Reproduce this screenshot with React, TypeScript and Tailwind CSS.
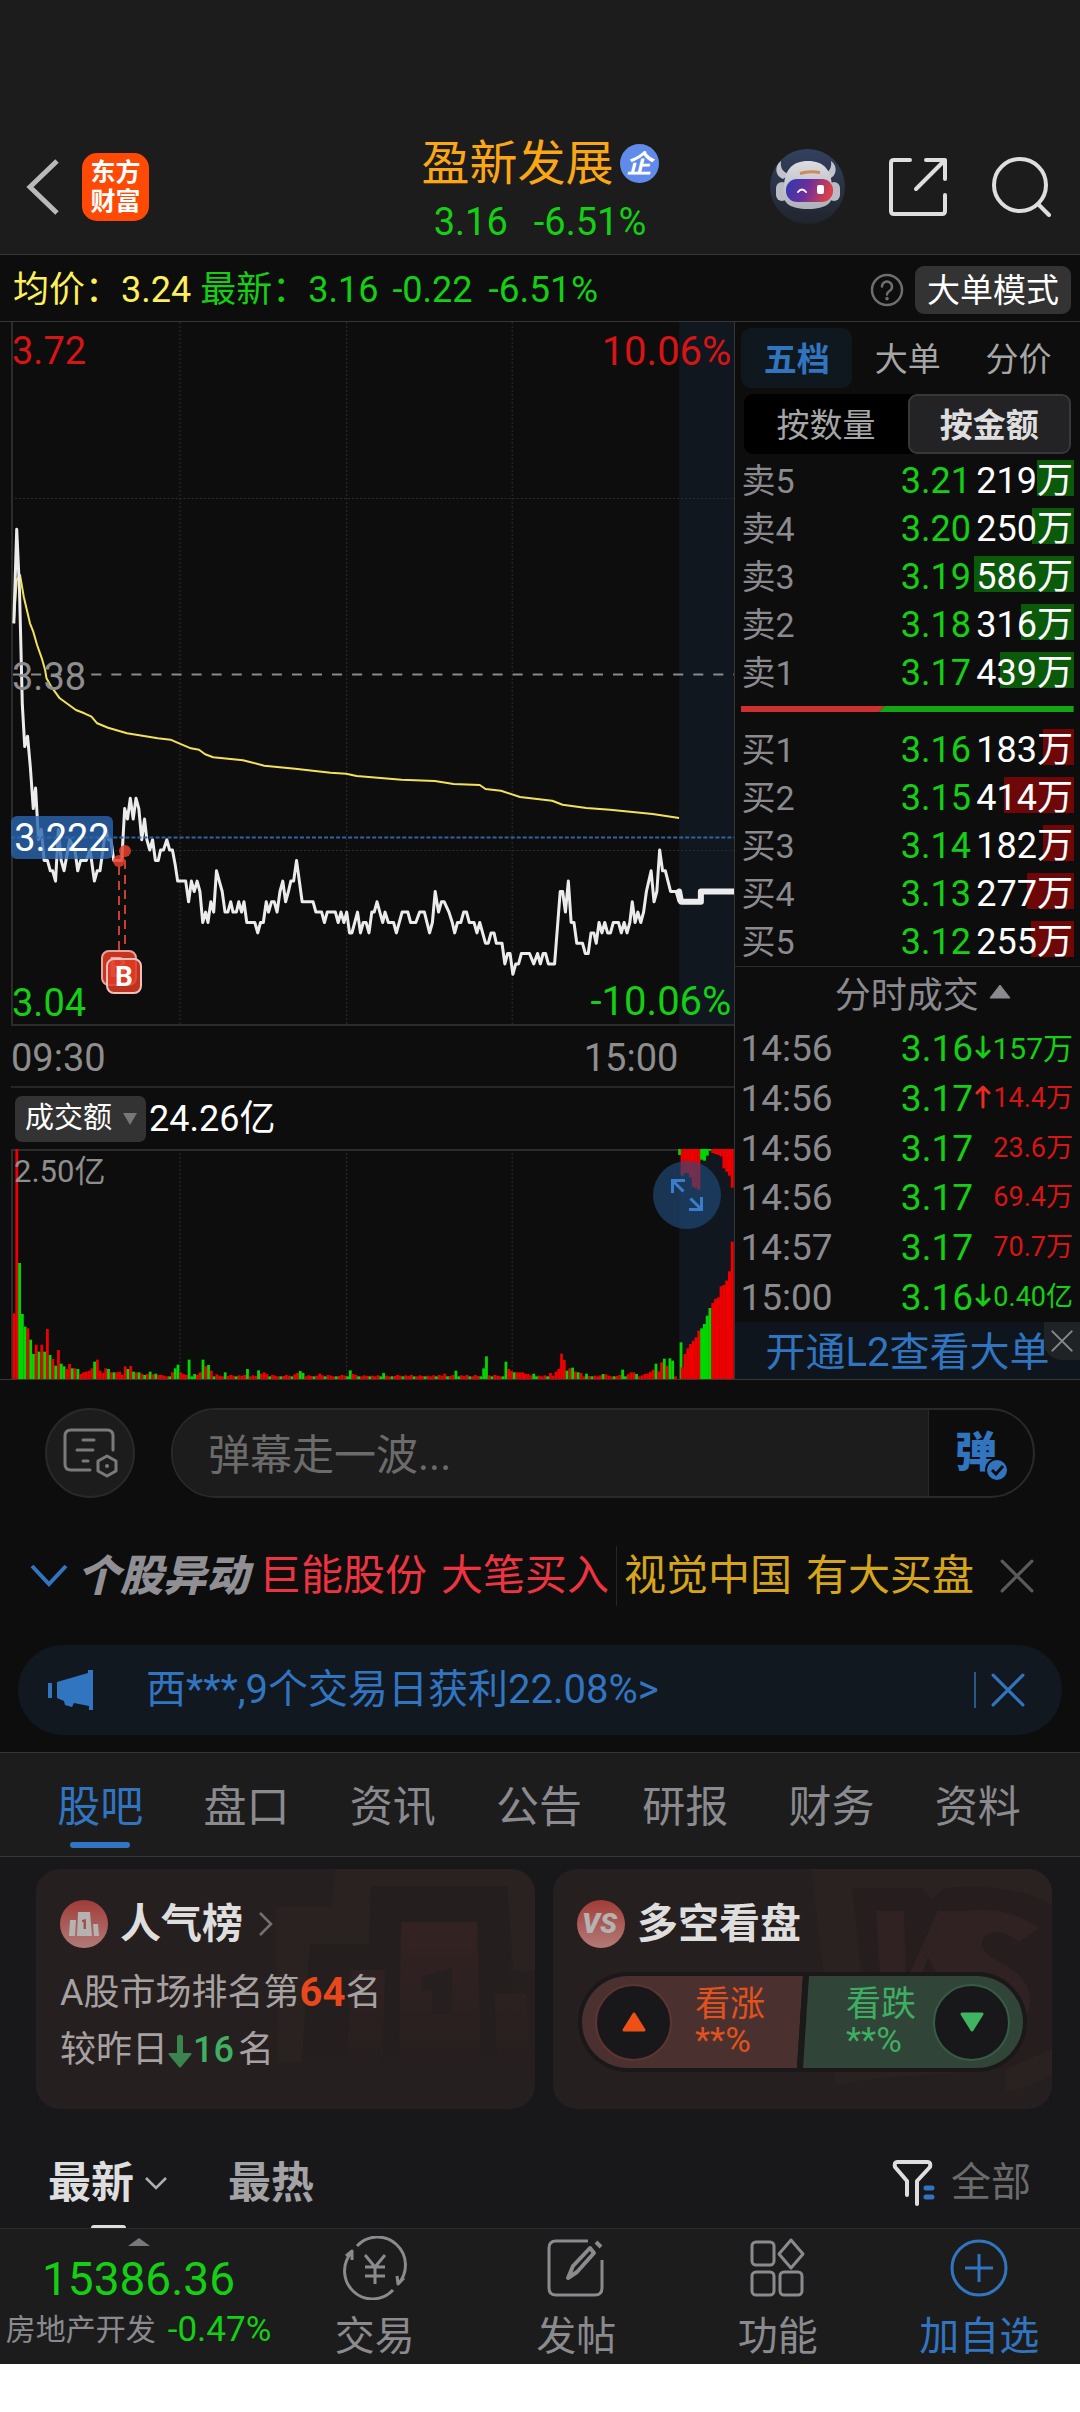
import React from "react";

const FONT = "font-[Roboto,'Noto_Sans_CJK_SC',sans-serif]";

/* ---------- chart data ---------- */

// Intraday price: [x, price ticks above 3.04]
const PRICE: [number, number][] = [
  [31, 38.9], [37, 48], [43, 42], [49, 31], [54, 27], [60, 28], [66, 25], [72, 21], [77, 23], [83, 18], [89, 19],
  [95, 16], [102, 16], [108, 15], [113, 15], [119, 14], [125, 19], [131, 16], [137, 15], [149, 18], [160, 17],
  [166, 15], [172, 16], [184, 16], [192, 17], [201, 14], [207, 15], [213, 15], [219, 17], [225, 19], [231, 18],
  [236, 18], [242, 16], [259, 16], [265, 21], [271, 20], [277, 22], [283, 20], [289, 22], [295, 21], [301, 18],
  [307, 20], [312, 18], [318, 17], [324, 18], [330, 16], [336, 16], [341, 17], [347, 17], [354, 18], [360, 17],
  [366, 17], [372, 15.5], [377, 14], [394, 14], [400, 12], [406, 14], [412, 13], [418, 14], [424, 13], [430, 10],
  [436, 11], [441, 10], [447, 12], [453, 11], [459, 15], [465, 14], [471, 13], [477, 11], [483, 11], [489, 12],
  [494, 11], [501, 11], [506, 12], [512, 11], [517, 12], [523, 10], [540, 10], [546, 9], [552, 10], [558, 10],
  [564, 12], [569, 11], [575, 12], [581, 12], [587, 11], [593, 13], [599, 14], [605, 12], [611, 13], [616, 14],
  [622, 14], [628, 16], [634, 14], [640, 12], [663, 12], [669, 11], [681, 11], [687, 10], [693, 11], [710, 11],
  [716, 10], [722, 11], [728, 10], [734, 11], [740, 9], [745, 9], [757, 11], [763, 9], [769, 10], [775, 10],
  [781, 9], [787, 11], [792, 11], [798, 12], [804, 11], [810, 10], [815, 11], [822, 10], [833, 10], [839, 9],
  [851, 11], [863, 11], [869, 10], [880, 10], [888, 11], [898, 11], [909, 9], [915, 10], [921, 13], [928, 11],
  [934, 12], [940, 12], [950, 11], [957, 10], [962, 9], [968, 10], [975, 10], [981, 11], [987, 11], [993, 10],
  [1003, 10], [1009, 9], [1015, 10], [1027, 8], [1033, 8], [1039, 9], [1045, 9], [1050, 8], [1062, 8], [1068, 6],
  [1074, 7], [1079, 7], [1085, 5], [1091, 6], [1097, 6], [1103, 7], [1120, 7], [1129, 6], [1137, 7], [1143, 6],
  [1149, 7], [1154, 7], [1160, 6], [1173, 6], [1185, 13], [1190, 13], [1196, 11], [1202, 14], [1208, 10],
  [1214, 10], [1220, 8], [1232, 8], [1238, 7], [1244, 7], [1250, 9], [1256, 9], [1261, 8], [1267, 10], [1273, 9],
  [1279, 10], [1285, 9], [1291, 9], [1297, 10], [1308, 10], [1314, 9], [1320, 10], [1326, 9], [1332, 10],
  [1337, 12], [1343, 10], [1349, 11], [1355, 10], [1361, 11], [1367, 13], [1377, 15], [1383, 12], [1389, 13],
  [1395, 17], [1401, 15], [1407, 15], [1418, 13], [1430, 13], [1436, 12],
];
const AUCTION: [number, number][] = [[1436, 13], [1440, 12], [1482, 12], [1482, 13], [1553, 13]];

// Average price: [x, depth below the reference line]
const AVERAGE: [number, number][] = [
  [31, -170], [37, -300], [44, -315], [52, -250], [65, -170], [72, -145], [80, -105], [90, -65], [97, -30],
  [100, -5], [110, 20], [128, 55], [162, 90], [180, 100], [195, 110], [207, 130], [230, 143], [270, 160],
  [335, 175], [362, 179], [380, 190], [405, 205], [422, 209], [435, 223], [452, 232], [515, 241], [560, 257],
  [625, 266], [700, 278], [733, 281], [755, 288], [850, 299], [920, 303], [960, 312], [1015, 315], [1027, 327],
  [1060, 332], [1100, 351], [1168, 362], [1190, 374], [1240, 384], [1290, 389], [1380, 402], [1436, 414],
];

const toX = (v: number) => (v - 25) / 2.119;
const tickY = (t: number) => 704 - t * 10.35;
const line = (pts: [number, number][], fy: (v: number) => number) =>
  pts.map(([x, y]) => `${toX(x).toFixed(1)},${fy(y).toFixed(1)}`).join(" ");

// Turnover per minute; positive is up (red), negative is down (green)
const OPENING = [
  197, 690, -348, -195, -157, 152, -118, -75, 103, -82, 103, -82, 150, -72, 60, -40, 87, -46, -38, 30, 45, -32, 32,
  -30, 15, 20, 22, 24, 32, -52, 58, 25, 18, 32, -30, 20, -20, 20, 22, 12, 38, -30, 39, -22, 20, -20, 16, -12, 15, -22,
];
const SPIKES: Record<number, number> = {
  50: 14, 51: -16, 52: 12, 57: 20, 58: -32, 59: -43, 60: 20, 61: 15, 62: 12, 63: -58, 65: -15, 66: 12, 67: 20,
  68: -58, 69: 38, 70: -42, 71: 25, 73: 14, 76: -20, 84: -30, 88: -26, 89: 16, 90: 20, 91: 15, 101: 14, 102: 18,
  103: -24, 104: -18, 110: 16, 121: -26, 122: 15, 133: -18, 155: 16, 159: -25, 166: 12, 169: -32, 170: -68, 173: 12,
  177: -52, 178: 30, 179: 24, 180: -20, 181: 20, 182: 20, 183: 20, 184: 16, 185: 15, 187: -16, 193: 18, 195: 22,
  196: 30, 197: 76, 198: 57, 199: -25, 200: 32, 201: -34, 202: 22, 203: -20, 204: 18, 206: -16, 212: -15, 213: 14,
  219: -28, 221: 14, 222: 20, 223: 20, 224: -15, 227: 15, 228: 16, 229: 22, 230: 28, 231: -46, 232: 23, 233: 50,
  234: -61, 235: 40, 236: -62, 237: -55, 238: 8, 240: -110,
};
const VOLUME = Array.from({ length: 241 }, (_, i) => {
  if (i < OPENING.length) return OPENING[i];
  if (SPIKES[i] !== undefined) return SPIKES[i];
  if (i === 239) return 0;
  return (i * 7) % 4 === 0 ? -(8 + ((i * 5) % 5)) : 8 + ((i * 3) % 5);
});
const CLOSE_BOTTOM = [
  35, 75, 92, 105, 115, 125, 145, -152, -165, -190, -213, 228, 240, 245, 278, 282, 295, 323, 412,
];
const CLOSE_TOP = [80, 72, 72, 85, 113, 118, 122, -32, -35, -20, -5, 12, 15, 18, 22, 58, 68, 80, 116];

const RED = "#ee0000";
const GREEN = "#00d800";
const barColor = (v: number) => (v > 0 ? RED : GREEN);

/* ---------- quote data ---------- */

type Level = { side: string; price: string; amount: string; bar: number };
const ASKS: Level[] = [
  { side: "卖5", price: "3.21", amount: "219万", bar: 37 },
  { side: "卖4", price: "3.20", amount: "250万", bar: 42 },
  { side: "卖3", price: "3.19", amount: "586万", bar: 100 },
  { side: "卖2", price: "3.18", amount: "316万", bar: 53 },
  { side: "卖1", price: "3.17", amount: "439万", bar: 74 },
];
const BIDS: Level[] = [
  { side: "买1", price: "3.16", amount: "183万", bar: 31 },
  { side: "买2", price: "3.15", amount: "414万", bar: 70 },
  { side: "买3", price: "3.14", amount: "182万", bar: 31 },
  { side: "买4", price: "3.13", amount: "277万", bar: 47 },
  { side: "买5", price: "3.12", amount: "255万", bar: 43 },
];
const TRADES = [
  { time: "14:56", price: "3.16", dir: "down", amount: "157万", cls: "text-[30px] text-[#14cf14]" },
  { time: "14:56", price: "3.17", dir: "up", amount: "14.4万", cls: "text-[27px] text-[#d81414]" },
  { time: "14:56", price: "3.17", dir: "", amount: "23.6万", cls: "text-[27px] text-[#d81414]" },
  { time: "14:56", price: "3.17", dir: "", amount: "69.4万", cls: "text-[27px] text-[#d81414]" },
  { time: "14:57", price: "3.17", dir: "", amount: "70.7万", cls: "text-[27px] text-[#d81414]" },
  { time: "15:00", price: "3.16", dir: "down", amount: "0.40亿", cls: "text-[27px] text-[#14cf14]" },
];

/* ---------- small icons ---------- */

function Cross({ className }: { className: string }) {
  return (
    <svg viewBox="0 0 32 32" className={className} fill="none" stroke="currentColor" strokeWidth="3" strokeLinecap="round">
      <path d="M2 2 30 30M30 2 2 30" />
    </svg>
  );
}

function Robot() {
  return (
    <svg viewBox="0 0 75 75" className="size-[75px]">
      <defs>
        <linearGradient id="botBg" x1="0" y1="0" x2="0" y2="1">
          <stop offset="0" stopColor="#33415f" />
          <stop offset="1" stopColor="#20242c" />
        </linearGradient>
        <linearGradient id="botShell" x1="0" y1="0" x2="0" y2="1">
          <stop offset="0" stopColor="#dcdce2" />
          <stop offset="1" stopColor="#aeb0ba" />
        </linearGradient>
        <linearGradient id="botVisor" x1="0" y1="0" x2="1" y2="0.2">
          <stop offset="0" stopColor="#2b3bb0" />
          <stop offset="0.5" stopColor="#6a2f9c" />
          <stop offset="1" stopColor="#d8404c" />
        </linearGradient>
      </defs>
      <circle cx="37.500" cy="37.500" r="37.500" fill="url(#botBg)" />
      <path d="M11 12C4 17 5 27 13 30L20 25C13 24 10 19 11 12Z" fill="#c2c3cc" />
      <path d="M61 12c7 5 6 15-2 18l-7-5c7-1 10-6 9-13Z" fill="#c2c3cc" />
      <rect x="6" y="33" width="12" height="19" rx="6" fill="#b9bac2" />
      <rect x="58" y="33" width="12" height="19" rx="6" fill="#b9bac2" />
      <path d="M38 12c16 0 23 9 24 25 4 17-6 23-24 23S10 54 14 37c1-16 8-25 24-25Z" fill="url(#botShell)" />
      <path d="M30 24.500q9-3 20-1" stroke="#d08a55" strokeWidth="3" fill="none" />
      <rect x="16" y="30" width="47" height="23" rx="11" fill="url(#botVisor)" />
      <path d="M28 43q4-5 8 0" stroke="#fff" strokeWidth="2" fill="none" strokeLinecap="round" />
      <rect x="47" y="36" width="7" height="9" rx="2" fill="#fff" />
    </svg>
  );
}

/* ---------- sections ---------- */

function Header() {
  return (
    <header className="grid h-[136px] grid-cols-[1fr_auto_1fr] items-center border-b border-[#363636] px-[26px]">
      <div className="flex items-center gap-[22px]">
        <button aria-label="返回">
          <svg viewBox="0 0 34 56" className="h-[56px] w-[34px]" fill="none" stroke="#b9b9b9" strokeWidth="5">
            <path d="M31 2 4 28 31 54" />
          </svg>
        </button>
        <a
          href="#home"
          className="flex h-[68px] w-[67px] flex-col items-center justify-center rounded-[15px] bg-[#ff4a05] text-[25px] leading-[29px] font-bold text-white"
        >
          <span>东方</span>
          <span>财富</span>
        </a>
      </div>
      <div className="flex flex-col items-center pt-[10px]">
        <h1 className="flex items-center gap-[6px] text-[48px] leading-[60px] text-[#fba615]">
          盈新发展
          <span className="flex size-[39px] items-center justify-center rounded-full bg-[#608bea] text-[26px] leading-none font-bold text-white italic">
            企
          </span>
        </h1>
        <p className="flex gap-[26px] text-[38px] leading-[56px] text-[#14cf14]">
          <span>3.16</span>
          <span>-6.51%</span>
        </p>
      </div>
      <div className="flex items-center justify-end gap-[43px] pr-[3px]">
        <button aria-label="智能助手">
          <Robot />
        </button>
        <button aria-label="分享">
          <svg viewBox="0 0 60 60" className="size-[60px]" fill="none" stroke="#dedede" strokeWidth="4" strokeLinecap="round" strokeLinejoin="round">
            <path d="M22 3H6Q3 3 3 6V54Q3 57 6 57H54Q57 57 57 54V38" />
            <path d="M38 3H57V22M57 3 28 32" />
          </svg>
        </button>
        <button aria-label="搜索">
          <svg viewBox="0 0 60 60" className="size-[60px]" fill="none" stroke="#dedede" strokeWidth="4" strokeLinecap="round">
            <circle cx="29" cy="28" r="26" />
            <path d="M47 47 58 58" />
          </svg>
        </button>
      </div>
    </header>
  );
}

function InfoBar() {
  return (
    <div className="flex h-[67px] items-center border-b border-[#363636] bg-[#0d0d0d] pt-[3px] pr-[9px] pl-[13px] text-[36px] leading-none text-[#14cf14]">
      <span className="text-[#fdf05c]">均价：3.24</span>
      <span className="ml-[9px]">最新：3.16</span>
      <span className="ml-[14px]">-0.22</span>
      <span className="ml-[16px] text-[37px]">-6.51%</span>
      <button aria-label="说明" className="ml-auto">
        <svg viewBox="0 0 34 34" className="size-[34px]" fill="none" stroke="#6e6e6e" strokeWidth="2.500" strokeLinecap="round">
          <circle cx="17" cy="17" r="15" />
          <path d="M12 13.500a5 5 0 1 1 8 4q-3 2-3 4" />
          <path d="M17 25.500v.2" strokeWidth="3.500" />
        </svg>
      </button>
      <button className="ml-[11px] h-[48px] rounded-[9px] bg-[#333] px-[12px] pt-[2px] text-[33px] leading-none text-white">大单模式</button>
    </div>
  );
}

function PriceChart() {
  return (
    <div className="relative ml-[11px] h-[704px] text-[38px] leading-none">
      <svg viewBox="0 0 721 704" preserveAspectRatio="none" className="block size-full">
        <rect x="666" y="0" width="55" height="704" fill="#10171f" />
        <g stroke="#2d2d2d" strokeDasharray="2 2">
          {[168.500, 334.500, 499.500].map((x) => (
            <line key={x} x1={x} x2={x} y1="0" y2="704" />
          ))}
          <line x1="0" x2="721" y1="176.500" y2="176.500" />
          <line x1="0" x2="721" y1="528.500" y2="528.500" />
        </g>
        <line x1="0" x2="721" y1="352.500" y2="352.500" stroke="#8a8a8a" strokeWidth="2" strokeDasharray="10 10" />
        <path d="M1 0V703H721" stroke="#2c2c2c" strokeWidth="2" fill="none" />
        <polyline points={line(AVERAGE, (v) => v / 3 + 358)} fill="none" stroke="#f2e25a" strokeWidth="2" strokeLinejoin="round" />
        <polyline points={line(PRICE, tickY)} fill="none" stroke="#ececec" strokeWidth="3" strokeLinejoin="round" />
        <polyline points={line(AUCTION, tickY)} fill="none" stroke="#ececec" strokeWidth="6" strokeLinejoin="round" strokeLinecap="round" />
        <line x1="0" x2="721" y1="515.500" y2="515.500" stroke="#2f64a3" strokeWidth="2" strokeDasharray="4 2" />
      </svg>
      <span className="absolute top-[10px] left-[1px] text-[#d81414]">3.72</span>
      <span className="absolute top-[10px] right-[3px] text-[40px] text-[#d81414]">10.06%</span>
      <span className="absolute top-[336px] left-[1px] text-[#8e8e8e]">3.38</span>
      <span className="absolute bottom-[4px] left-[1px] text-[#14cf14]">3.04</span>
      <span className="absolute right-[3px] bottom-[4px] text-[40px] text-[#14cf14]">-10.06%</span>
      <span className="absolute top-[494px] left-0 flex h-[43px] w-[102px] items-center justify-center rounded-[6px] bg-[#2a66b0]/80 text-[38px] text-white">
        3.222
      </span>
      <svg viewBox="0 0 50 170" className="absolute top-[522px] left-[87px] h-[170px] w-[50px]">
        <circle cx="21" cy="17" r="6" fill="#e8412c" fillOpacity="0.85" />
        <circle cx="27" cy="7" r="6" fill="#e8412c" fillOpacity="0.85" />
        <g stroke="#c8402f" strokeWidth="2" strokeDasharray="9 6">
          <path d="M21 22V112M27 16V120" />
        </g>
        <rect x="4" y="107" width="34" height="34" rx="7" fill="#c8341f" stroke="#e0a79f" strokeWidth="2" />
        <text x="20" y="133" textAnchor="middle" fontSize="28" fontWeight="700" fill="#e8a79e">B</text>
        <rect x="9" y="115" width="34" height="34" rx="7" fill="#e03a24" fillOpacity="0.85" stroke="#eec1ba" strokeWidth="2" />
        <text x="26" y="142" textAnchor="middle" fontSize="28" fontWeight="700" fill="#fff">B</text>
      </svg>
    </div>
  );
}

function VolumeChart() {
  return (
    <div className="relative ml-[11px] h-[230px]">
      <svg viewBox="0 0 721 230" preserveAspectRatio="none" className="block size-full">
        <rect x="666" y="0" width="55" height="230" fill="#10171f" />
        <path d="M1 230V1H721" stroke="#2c2c2c" strokeWidth="2" fill="none" />
        <g stroke="#2d2d2d" strokeDasharray="2 2">
          {[168.500, 334.500, 499.500].map((x) => (
            <line key={x} x1={x} x2={x} y1="0" y2="230" />
          ))}
        </g>
        {VOLUME.map((v, i) => (
          <rect key={i} x={1.600 + i * 2.770} y={230 - Math.abs(v) / 3} width="2.800" height={Math.abs(v) / 3} fill={barColor(v)} />
        ))}
        <rect x="665" y="0" width="3" height="6" fill={GREEN} />
        {CLOSE_BOTTOM.map((v, i) => (
          <rect key={i} x={667.500 + i * 2.770} y={230 - Math.abs(v) / 3} width="3" height={Math.abs(v) / 3} fill={barColor(v)} />
        ))}
        {CLOSE_TOP.map((v, i) => (
          <rect key={i} x={667.500 + i * 2.770} y="0" width="3" height={Math.abs(v) / 3} fill={barColor(v)} />
        ))}
      </svg>
      <span className="absolute top-[7px] left-[3px] text-[31px] leading-none text-[#8e8e8e]">2.50亿</span>
      <button
        aria-label="展开图表"
        className="absolute top-[12px] right-[13px] flex size-[68px] items-center justify-center rounded-full bg-[#225082]/60"
      >
        <svg viewBox="0 0 36 36" className="size-[36px]" fill="none" stroke="#3a7ecb" strokeWidth="3">
          <path d="M3.500 16V3.500H16M3.500 3.500 14.500 14.500M32.500 20V32.500H20M32.500 32.500 21.500 21.500" />
        </svg>
      </button>
    </div>
  );
}

function Charts() {
  return (
    <div className="flex min-w-0 flex-col">
      <PriceChart />
      <div className="ml-[11px] flex h-[60px] items-center justify-between pt-[4px] pr-[56px] text-[38px] leading-none text-[#8e8e8e]">
        <span>09:30</span>
        <span>15:00</span>
      </div>
      <div className="ml-[11px] flex h-[63px] items-center gap-[3px] border-t-2 border-[#262626] pl-[4px] text-white">
        <button className="flex h-[46px] w-[131px] items-center gap-[11px] rounded-[7px] bg-[#333] pl-[10px] text-[29px] leading-none">
          成交额
          <svg viewBox="0 0 14 12" className="h-[12px] w-[14px]">
            <path d="M0 0H14L7 12Z" fill="#777" />
          </svg>
        </button>
        <span className="text-[36px] leading-none">24.26亿</span>
      </div>
      <VolumeChart />
    </div>
  );
}

function Levels({ rows, barClass, label }: { rows: Level[]; barClass: string; label: string }) {
  return (
    <table aria-label={label} className="w-full table-fixed border-collapse text-[36px] leading-none">
      <tbody>
        {rows.map((r) => (
          <tr key={r.side} className="h-[48px]">
            <th scope="row" className="p-0 text-left text-[34px] font-normal text-[#8a8a8f]">
              {r.side}
            </th>
            <td className="p-0 text-right text-[#14cf14]">{r.price}</td>
            <td className="relative w-[103px] p-0 pr-px text-right text-white">
              <span className={`absolute top-[3px] right-0 h-[36px] ${barClass}`} style={{ width: r.bar }} />
              <span className="relative whitespace-nowrap">{r.amount}</span>
            </td>
          </tr>
        ))}
      </tbody>
    </table>
  );
}

function OrderPanel() {
  return (
    <aside className="flex flex-col border-l border-[#363636]">
      <div className="px-[6px] pt-[6px]">
        <div role="tablist" className="grid h-[60px] grid-cols-3 text-[33px] leading-none text-[#a6a6a6]">
          <button role="tab" aria-selected="true" className="rounded-[10px] bg-[#10181f] pt-[3px] font-bold text-[#3175c1]">五档</button>
          <button role="tab" aria-selected="false" className="pt-[3px]">大单</button>
          <button role="tab" aria-selected="false" className="pt-[3px]">分价</button>
        </div>
        <div className="mx-[3px] mt-[6px] grid h-[60px] grid-cols-2 rounded-[9px] bg-black text-[33px] leading-none text-[#a6a6a6]">
          <button className="pt-[3px]">按数量</button>
          <button className="rounded-[9px] border-2 border-[#38383a] bg-[#232326] pt-[3px] font-bold text-[#dedede]">按金额</button>
        </div>
        <div className="mt-[3px]">
          <Levels rows={ASKS} barClass="bg-[#0a5a0a]" label="卖盘" />
        </div>
        <svg viewBox="0 0 333 6" preserveAspectRatio="none" className="mt-[9px] mb-[14px] block h-[6px] w-full">
          <path d="M0 0H144L138 6H0Z" fill="#cc3030" />
          <path d="M144 0H333V6H138Z" fill="#14a514" />
        </svg>
        <Levels rows={BIDS} barClass="bg-[#6e0808]" label="买盘" />
      </div>
      <button className="flex h-[58px] w-full items-center justify-center gap-[10px] border-t border-[#2a2a2a] pl-[30px] text-[36px] leading-none text-[#8a8a8f]">
        分时成交
        <svg viewBox="0 0 22 15" className="mb-[8px] h-[15px] w-[22px]">
          <path d="M11 1 21 14H1Z" fill="#8a8a8f" stroke="#8a8a8f" strokeLinejoin="round" />
        </svg>
      </button>
      <table aria-label="分时成交" className="h-[298px] w-full table-fixed border-collapse text-[37px] leading-none">
        <tbody>
          {TRADES.map((t, i) => (
            <tr key={i}>
              <td className="p-0 pl-[5px] text-left text-[#8a8a8f]">{t.time}</td>
              <td className="p-0 text-right text-[#14cf14]">{t.price}</td>
              <td className={`relative w-[107px] p-0 pr-[7px] text-right ${t.cls}`}>
                {t.dir && (
                  <svg
                    viewBox="0 0 16 24"
                    className="absolute top-[11px] left-[2px] h-[24px] w-[16px]"
                    fill="none"
                    stroke={t.dir === "up" ? "#ee2a20" : "#14cf14"}
                    strokeWidth="3"
                    strokeLinecap="round"
                    strokeLinejoin="round"
                  >
                    <path d={t.dir === "up" ? "M8 22V2M2 8 8 2 14 8" : "M8 2V22M2 16 8 22 14 16"} />
                  </svg>
                )}
                <span className="whitespace-nowrap">{t.amount}</span>
              </td>
            </tr>
          ))}
        </tbody>
      </table>
      <div className="relative flex flex-1 items-center bg-[#0f151c] pt-[4px] pl-[30px]">
        <a href="#level2" className="text-[40px] leading-none whitespace-nowrap text-[#3175c1]">开通L2查看大单</a>
        <button
          aria-label="关闭"
          className="absolute top-0 right-0 flex h-[38px] w-[36px] items-center justify-center rounded-bl-[18px] bg-[#1f2326] text-[#85888a]"
        >
          <Cross className="size-[22px]" />
        </button>
      </div>
    </aside>
  );
}

function Danmu() {
  return (
    <form className="flex h-[90px] items-center gap-[36px] pr-[45px] pl-[45px]" onSubmit={(e) => e.preventDefault()}>
      <button type="button" aria-label="弹幕设置" className="flex size-[90px] shrink-0 items-center justify-center rounded-full border-2 border-[#292929] bg-[#1c1c1c]">
        <svg viewBox="0 0 56 52" className="h-[52px] w-[56px]" fill="none" stroke="#7a7a7a" strokeWidth="3" strokeLinecap="round">
          <path d="M28 43H9Q3 43 3 37V9Q3 3 9 3H45Q51 3 51 9V23" />
          <path d="M21 13H32M15 23H31M21 34H26" />
          <path d="M45 29 54 34V44L45 49 36 44V34Z" strokeLinejoin="round" />
          <circle cx="45" cy="39" r="2" fill="#7a7a7a" stroke="none" />
        </svg>
      </button>
      <div className="flex h-full flex-1 overflow-hidden rounded-full border-2 border-[#292929]">
        <input
          aria-label="弹幕"
          placeholder="弹幕走一波..."
          className="min-w-0 flex-1 border-r border-[#292929] bg-[#1c1c1c] pt-[4px] pl-[35px] text-[42px] leading-none text-[#ddd] outline-none placeholder:text-[#6b6b6b]"
        />
        <button type="submit" aria-label="弹幕开关" className="relative w-[104px] pl-[26px] text-left text-[42px] leading-none font-black text-[#3175c1]">
          弹
          <svg viewBox="0 0 24 24" className="absolute right-[24px] bottom-[14px] size-[24px]">
            <circle cx="12" cy="12" r="11" fill="#3175c1" stroke="#0d0d0d" strokeWidth="2" />
            <path d="M7 12 11 16 18 8" fill="none" stroke="#0d0d0d" strokeWidth="3" />
          </svg>
        </button>
      </div>
    </form>
  );
}

function Movers() {
  return (
    <div className="mt-[48px] flex h-[60px] items-center pr-[46px] pl-[30px] text-[42px] leading-none">
      <button aria-label="展开" className="text-[#3175c1]">
        <svg viewBox="0 0 38 24" className="h-[24px] w-[38px]" fill="none" stroke="currentColor" strokeWidth="4">
          <path d="M2 2 19 20 36 2" />
        </svg>
      </button>
      <strong className="ml-[9px] text-[43px] font-black text-[#8f8f94] italic">个股异动</strong>
      <a href="#juneng" className="ml-[10px] flex gap-[14px] whitespace-nowrap text-[#ee3440]">
        <span>巨能股份</span>
        <span>大笔买入</span>
      </a>
      <span className="mx-[7px] h-full w-px bg-[#262626]" />
      <a href="#visual-china" className="flex gap-[14px] whitespace-nowrap text-[#d6a51a]">
        <span>视觉中国</span>
        <span>有大买盘</span>
      </a>
      <button aria-label="关闭" className="ml-auto text-[#5a5a5a]">
        <Cross className="size-[34px]" />
      </button>
    </div>
  );
}

function Banner() {
  return (
    <div className="mx-[18px] mt-[39px] flex h-[90px] items-center rounded-full bg-[#111820] pr-[37px] pl-[30px] text-[#3175c1]">
      <svg viewBox="0 0 46 40" className="h-[40px] w-[46px]" fill="currentColor">
        <path d="M0 13H4V28H0ZM9 12 40 3V0H45V40H41V36L26 33 24 37 17 35 16 31 9 28Z" />
      </svg>
      <a href="#rank" className="ml-[52px] text-[40px] leading-none">西***,9个交易日获利22.08%&gt;</a>
      <span className="ml-auto h-[36px] w-[2px] bg-[#28588e]" />
      <button aria-label="关闭" className="ml-[15px]">
        <Cross className="size-[34px]" />
      </button>
    </div>
  );
}

function SectionTabs() {
  const tabs = ["股吧", "盘口", "资讯", "公告", "研报", "财务", "资料"];
  return (
    <nav className="mt-[17px] border-y border-[#363636] bg-[#1c1c1c] pr-[29px] pl-[27px]">
      <div role="tablist" className="grid h-[103px] grid-cols-7 text-[43px] leading-none text-[#8a8a8f]">
        {tabs.map((t, i) =>
          i === 0 ? (
            <button key={t} role="tab" aria-selected="true" className="relative pt-[6px] text-[#3175c1]">
              {t}
              <span className="absolute bottom-[8px] left-1/2 h-[6px] w-[60px] -translate-x-1/2 rounded-full bg-[#3175c1]" />
            </button>
          ) : (
            <button key={t} role="tab" aria-selected="false" className="pt-[6px]">
              {t}
            </button>
          ),
        )}
      </div>
    </nav>
  );
}

function PopularityCard() {
  return (
    <a href="#popularity" className="relative flex h-[240px] flex-col overflow-hidden rounded-[24px] bg-[#261f1f] pt-[26px] pl-[24px]">
      <svg viewBox="0 0 260 240" className="absolute top-0 right-0 h-full w-[260px]">
        <path d="M0 38H56L60 0H260V102H238L232 17H96V75H35L27 193H3Z" fill="#2a2121" />
        <path d="M96 17H232L238 193H27L35 75H94Z" fill="#251e1e" />
        <defs>
          <linearGradient id="podium" x1="0" y1="0" x2="0" y2="1">
            <stop offset="0" stopColor="#342222" />
            <stop offset="1" stopColor="#261f1f" />
          </linearGradient>
        </defs>
        <path d="M126 53H202L206 195H124ZM76 101H110L107 195H72ZM220 125H251L256 195H222Z" fill="url(#podium)" />
        <path d="M147 108 177 99V145H157V120L147 123Z" fill="#261f1f" />
      </svg>
      <span className="relative flex h-[58px] items-center text-[41px] leading-none font-bold text-[#dedede]">
        <svg viewBox="0 0 48 48" className="mr-[12px] size-[48px]">
          <defs>
            <linearGradient id="badge" x1="0" y1="0" x2="0" y2="1">
              <stop offset="0" stopColor="#a03c38" />
              <stop offset="1" stopColor="#b27a78" />
            </linearGradient>
          </defs>
          <circle cx="24" cy="24" r="24" fill="url(#badge)" />
          <path d="M10 20H16L15 36H9ZM18 12H30L32 36H17ZM33 24H38L39 36H34Z" fill="#b5b2b2" />
          <path d="M22 20 26 19V29H23.500V22H22Z" fill="#a5504c" />
        </svg>
        人气榜
        <svg viewBox="0 0 14 24" className="ml-[16px] h-[24px] w-[14px]" fill="none" stroke="#77706f" strokeWidth="2.500">
          <path d="M1 1 12 12 1 23" />
        </svg>
      </span>
      <span className="relative mt-[11px] flex h-[58px] items-center text-[36px] leading-none text-[#a6a2a2]">
        A股市场排名第<b className="text-[40px] text-[#e8481c]">64</b>名
      </span>
      <span className="relative flex h-[56px] items-center text-[36px] leading-none text-[#a6a2a2]">
        较昨日
        <svg viewBox="0 0 24 34" className="mt-[2px] h-[34px] w-[24px]" fill="#3a8450">
          <path d="M9 2Q12-1 15 2V19H23Q24 20 23 21L13 33Q12 34 11 33L1 21Q0 20 1 19H9Z" />
        </svg>
        <span className="mr-[4px] ml-px text-[36px] font-medium text-[#3fb062]">16</span>名
      </span>
    </a>
  );
}

function SentimentCard() {
  return (
    <section className="relative flex h-[240px] flex-col overflow-hidden rounded-[24px] bg-[#261f1f] pt-[26px] pr-[24px] pl-[24px]">
      <svg viewBox="0 0 260 240" className="absolute top-0 right-0 h-full w-[260px]">
        <path d="M19 0H260V205Q240 218 214 223V200L80 210 44 216Z" fill="#2a2121" />
        <path d="M60 19H130L140 31 152 19Q225 14 260 36V180L214 200H80Z" fill="#261e1e" />
        <path
          d="M84 42H112L114 112 146 42H176Q214 36 247 59L227 73Q206 56 192 68 184 80 206 92 246 112 236 144 232 156 220 162L120 168H92Z"
          fill="#302222"
        />
        <path d="M147 108 136 88 128 110Z" fill="#261e1e" />
      </svg>
      <h2 className="relative flex h-[58px] items-center text-[41px] leading-none font-bold text-[#dedede]">
        <span className="mr-[12px] flex size-[48px] items-center justify-center rounded-full bg-linear-to-b from-[#a03c38] to-[#b27a78] pr-[3px] text-[28px] font-black text-[#b5b2b2] italic">
          VS
        </span>
        多空看盘
      </h2>
      <div className="relative mt-[18px] h-[102px] w-full">
        <svg viewBox="0 0 451 102" preserveAspectRatio="none" className="absolute inset-0 size-full">
          <rect x="1" y="1" width="449" height="100" rx="50" fill="#1a1819" />
          <path d="M51 5H226L220 97H51A46 46 0 0 1 51 5Z" fill="#4a302e" />
          <path d="M226 5H232L226 97H220Z" fill="#1c191a" />
          <path d="M232 5H400A46 46 0 0 1 400 97H226Z" fill="#304438" />
        </svg>
        <div className="relative flex h-full items-center justify-between px-[18px] text-[35px] leading-[38px]">
          <button className="flex items-center gap-[23px] text-left text-[#e0531f]">
            <span className="flex size-[77px] items-center justify-center rounded-full border-2 border-[#5f3431] bg-[#18181a]">
              <svg viewBox="0 0 24 20" className="h-[20px] w-[24px]">
                <path d="M12 2 22 18H2Z" fill="#ee5018" stroke="#ee5018" strokeWidth="3" strokeLinejoin="round" />
              </svg>
            </span>
            <span className="flex flex-col">
              <span>看涨</span>
              <span className="leading-[34px]">**%</span>
            </span>
          </button>
          <button className="flex items-center gap-[17px] text-left text-[#3fae62]">
            <span className="flex flex-col">
              <span>看跌</span>
              <span className="leading-[34px]">**%</span>
            </span>
            <span className="flex size-[77px] items-center justify-center rounded-full border-2 border-[#355d45] bg-[#18181a]">
              <svg viewBox="0 0 24 20" className="h-[20px] w-[24px]">
                <path d="M12 18 22 2H2Z" fill="#3fb562" stroke="#3fb562" strokeWidth="3" strokeLinejoin="round" />
              </svg>
            </span>
          </button>
        </div>
      </div>
    </section>
  );
}

function FeedTabs() {
  return (
    <div className="flex h-[119px] items-start pr-[49px] pl-[48px] leading-none">
      <button className="relative flex h-full items-start pt-[53px] text-[43px] font-bold text-[#dedede]">
        最新
        <svg viewBox="0 0 22 14" className="mt-[15px] ml-[11px] h-[14px] w-[22px]" fill="none" stroke="#b0b0b0" strokeWidth="2.500">
          <path d="M1 1 11 11 21 1" />
        </svg>
        <span className="absolute bottom-0 left-[43px] h-[3px] w-[35px] rounded-t bg-[#dedede]" />
      </button>
      <button className="mt-[53px] ml-[61px] text-[43px] font-bold text-[#a3a3a5]">最热</button>
      <button className="mt-[50px] ml-auto flex items-center text-[40px] text-[#6b6b6b]">
        <svg viewBox="0 0 44 48" className="mr-[15px] h-[48px] w-[44px]" fill="none" strokeLinecap="round" strokeLinejoin="round">
          <path d="M15 36V22L3 8Q2 3 5 3H36Q39 3 38 8L25 22V45" stroke="#dedede" strokeWidth="4" />
          <path d="M34 29H40M34 38H40" stroke="#3175c1" strokeWidth="5" />
        </svg>
        全部
      </button>
    </div>
  );
}

function BottomBar() {
  const items = [
    {
      label: "交易",
      cls: "text-[#8a8a8f]",
      icon: (
        <>
          <path d="M14 10A27 27 0 0 1 55 48M50 54A27 27 0 0 1 9 16" />
          <path d="M61 42 55 48 54 40M3 20 9 15 9 24" />
          <path d="M22 19 32 31 42 19M32 31V48M22 31H42M22 40H42" />
        </>
      ),
    },
    {
      label: "发帖",
      cls: "text-[#8a8a8f]",
      icon: (
        <>
          <path d="M44 5H12Q5 5 5 12V52Q5 59 12 59H51Q58 59 58 52V24" />
          <path d="M24 42 29 30 46 12 50 17 33 36ZM52 6 57 11" strokeWidth="4" />
        </>
      ),
    },
    {
      label: "功能",
      cls: "text-[#8a8a8f]",
      icon: (
        <>
          <rect x="6" y="6" width="22" height="23" rx="4" />
          <rect x="6" y="36" width="22" height="23" rx="4" />
          <rect x="34" y="36" width="22" height="23" rx="4" />
          <path d="M45 4 57 18 45 32 33 18Z" />
        </>
      ),
    },
    {
      label: "加自选",
      cls: "text-[#3175c1]",
      icon: (
        <>
          <circle cx="32" cy="32" r="27" />
          <path d="M32 18V46M18 32H46" />
        </>
      ),
    },
  ];
  return (
    <nav className="grid h-[136px] grid-cols-[274px_repeat(4,minmax(0,1fr))] border-t border-[#2a2a2a] bg-[#1c1c1c] leading-none">
      <button className="flex flex-col items-center pt-[9px] pl-[3px]">
        <svg viewBox="0 0 22 8" className="h-[8px] w-[22px]">
          <path d="M11 0 22 8H0Z" fill="#77777c" />
        </svg>
        <span className="mt-[10px] text-[46px] text-[#14cf14]">15386.36</span>
        <span className="mt-[10px] flex items-center gap-[12px] text-[35px] whitespace-nowrap text-[#14cf14]">
          <span className="text-[30px] text-[#8a8a8f]">房地产开发</span>-0.47%
        </span>
      </button>
      {items.map((it) => (
        <button key={it.label} className={`flex flex-col items-center pt-[7px] ${it.cls}`}>
          <svg viewBox="0 0 64 64" className="size-[64px]" fill="none" stroke="currentColor" strokeWidth="3" strokeLinejoin="round">
            {it.icon}
          </svg>
          <span className="mt-[17px] text-[40px]">{it.label}</span>
        </button>
      ))}
    </nav>
  );
}

export default function App() {
  return (
    <main className={`${FONT} w-full bg-[#0d0d0d] antialiased`}>
      <div className="bg-[#1c1c1c] pt-[119px]">
        <Header />
      </div>
      <InfoBar />
      <div className="grid grid-cols-[17fr_8fr] border-b border-[#363636]">
        <Charts />
        <OrderPanel />
      </div>
      <div className="pt-[28px]">
        <Danmu />
        <Movers />
        <Banner />
      </div>
      <SectionTabs />
      <div className="bg-[#18181a] pt-[12px]">
        <div className="grid grid-cols-2 gap-[18px] pr-[28px] pl-[36px]">
          <PopularityCard />
          <SentimentCard />
        </div>
        <FeedTabs />
      </div>
      <BottomBar />
    </main>
  );
}
